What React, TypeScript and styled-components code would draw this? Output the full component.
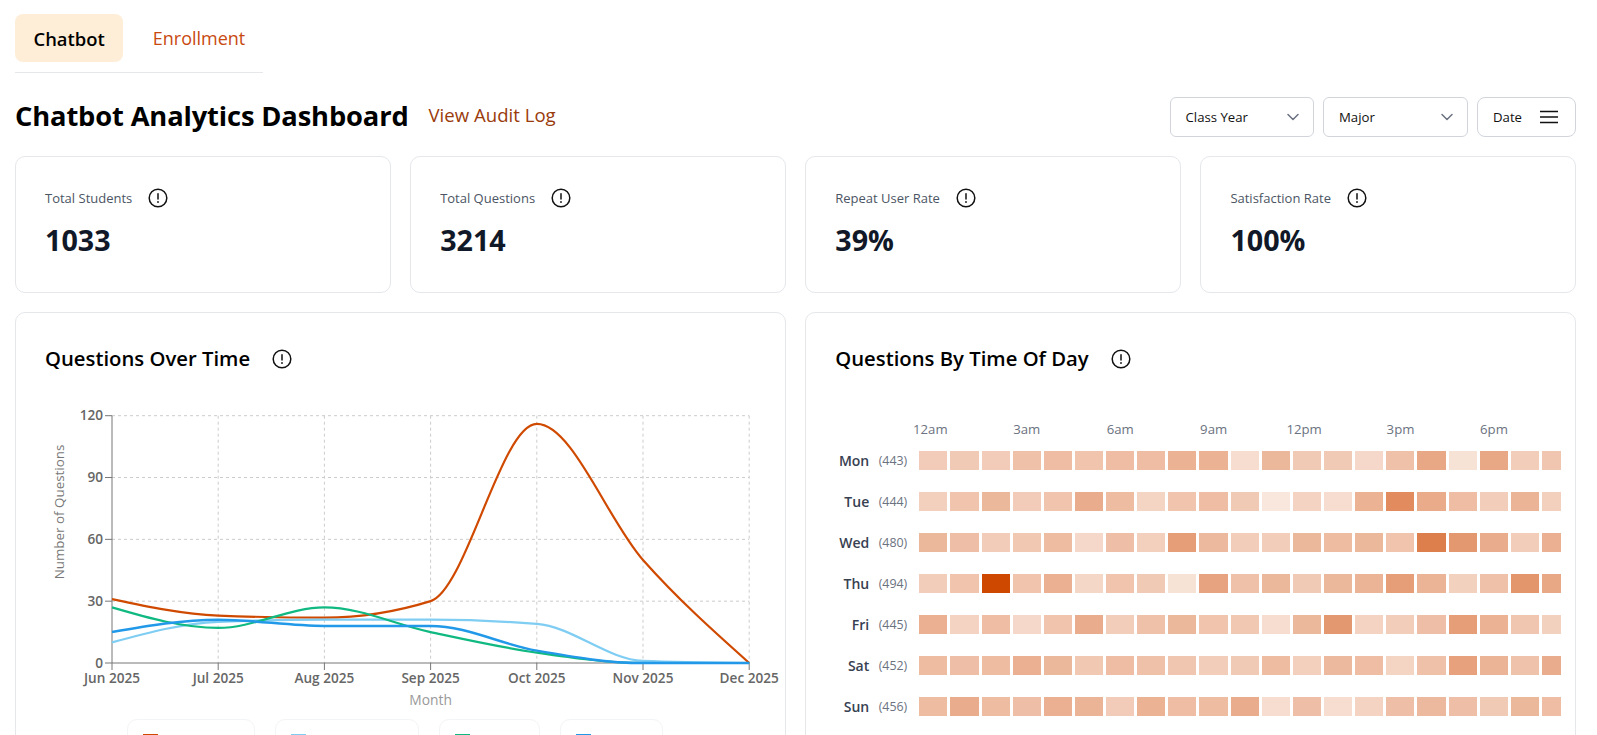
import React from "react";
import styled, { createGlobalStyle } from "styled-components";

const Global = createGlobalStyle`
  html, body { margin: 0; padding: 0; height: 100%; overflow: hidden; background: #fff; }
  body { font-family: "Open Sans", "Noto Sans", "Liberation Sans", sans-serif; color: #000; }
`;

const Page = styled.div`
  padding: 14px 21px 0 15px;
  box-sizing: border-box;
  width: 1597px;
`;

const TabBar = styled.div`
  display: flex;
  width: 248px;
  height: 59px;
  box-sizing: border-box;
  border-bottom: 1px solid #e5e7eb;
`;

const Tab = styled.div<{ $active?: boolean }>`
  height: 48px;
  padding: 0 18.5px;
  display: flex;
  align-items: center;
  border-radius: 8px;
  font-size: ${(p) => (p.$active ? 18.4 : 18)}px;
  font-weight: ${(p) => (p.$active ? 600 : 400)};
  color: ${(p) => (p.$active ? "#000" : "#c8490f")};
  background: ${(p) => (p.$active ? "#feeed8" : "transparent")};
  margin-left: ${(p) => (p.$active ? "0" : "11px")};
`;

const HeaderRow = styled.div`
  display: flex;
  align-items: center;
  height: 40px;
  margin-top: 24px;
`;

const Title = styled.h1`
  margin: 0;
  padding-bottom: 4px;
  font-size: 27.3px;
  font-weight: 700;
  letter-spacing: -0.14px;
`;

const AuditLink = styled.a`
  margin-left: 20px;
  padding-bottom: 5px;
  font-size: 18.6px;
  color: #9a3b0c;
`;

const Filters = styled.div`
  margin-left: auto;
  display: flex;
  gap: 9.5px;
`;

const FilterButton = styled.div<{ $width: number; $round?: boolean }>`
  width: ${(p) => p.$width}px;
  height: 40px;
  box-sizing: border-box;
  border: 1px solid #d1d5db;
  border-radius: ${(p) => (p.$round ? 8 : 6)}px;
  padding: 0 ${(p) => (p.$round ? 17 : 14)}px 0 15px;
  display: flex;
  align-items: center;
  justify-content: space-between;
  font-size: 13.2px;
  color: #111;
`;

const StatGrid = styled.div`
  display: grid;
  grid-template-columns: repeat(4, minmax(0, 1fr));
  gap: 19.5px;
  margin-top: 19px;
`;

const Card = styled.div`
  box-sizing: border-box;
  border: 1px solid #e5e7eb;
  border-radius: 10px;
  background: #fff;
`;

const StatCard = styled(Card)`
  height: 137px;
  padding: 29px 29px 0;
`;

const StatLabelRow = styled.div`
  display: flex;
  align-items: center;
  gap: 16px;
  height: 24px;
`;

const StatLabel = styled.span`
  font-size: 13px;
  font-weight: 500;
  color: #4b5563;
`;

const StatValue = styled.div`
  margin-top: 10px;
  font-size: 28.7px;
  line-height: 40px;
  font-weight: 700;
  color: #111827;
`;

const ChartGrid = styled.div`
  display: grid;
  grid-template-columns: repeat(2, minmax(0, 1fr));
  gap: 19.5px;
  margin-top: 19px;
`;

const ChartCard = styled(Card)`
  height: 520px;
  padding: 31px 14px 0 29px;
`;

const ChartTitleRow = styled.div`
  display: flex;
  align-items: center;
  gap: 22px;
  height: 30px;
`;

const ChartTitle = styled.h2`
  margin: 0;
  padding-bottom: 2px;
  font-size: 20.3px;
  font-weight: 600;
`;

const ChartSvg = styled.svg`
  display: block;
  margin-top: 21px;
  overflow: visible;
`;

const Legend = styled.div`
  display: flex;
  margin-left: 82px;
  gap: 20px;
`;

const LegendBox = styled.div<{ $width: number }>`
  box-sizing: border-box;
  width: ${(p) => p.$width}px;
  height: 60px;
  padding: 14px 15px;
  border: 1px solid #f3f4f6;
  border-radius: 10px;
`;

const Swatch = styled.div<{ $color: string }>`
  width: 15px;
  height: 12px;
  background: ${(p) => p.$color};
`;

const HourRow = styled.div`
  display: flex;
  margin: 44px 0 0 84px;
  height: 33px;
  padding-bottom: 11px;
  box-sizing: border-box;
  align-items: center;
`;

const HourSlot = styled.div<{ $wide?: boolean }>`
  flex: 0 0 28.15px;
  min-width: 0;
  margin-right: 65.3px;
  display: flex;
  justify-content: center;
  white-space: nowrap;
  font-size: 13.2px;
  color: #6b7280;
  transform: translateX(${(p) => (p.$wide ? "-3px" : "0")});
`;

const HeatRows = styled.div`
  display: flex;
  flex-direction: column;
  gap: 22px;
`;

const HeatRow = styled.div`
  display: flex;
  align-items: center;
  height: 19px;
`;

const DayName = styled.span`
  width: 34px;
  text-align: right;
  font-size: 14px;
  font-weight: 600;
  color: #374151;
`;

const DayCount = styled.span`
  width: 38px;
  margin-right: 12px;
  text-align: right;
  font-size: 12.4px;
  color: #6b7280;
`;

const Cells = styled.div`
  display: flex;
  gap: 3px;
  width: 642px;
  overflow: hidden;
`;

const Cell = styled.div<{ $alpha: number }>`
  flex: 0 0 28.15px;
  height: 19px;
  background: rgba(207, 72, 0, ${(p) => p.$alpha});
`;

const InfoIcon = () => (
  <svg width="20" height="20" viewBox="0 0 20 20" fill="none" stroke="#111" strokeWidth="1.5">
    <circle cx="10" cy="10" r="8.8" />
    <path d="M10 5.8v5.2" strokeLinecap="round" />
    <circle cx="10" cy="14" r="0.6" fill="#111" strokeWidth="0.8" />
  </svg>
);

const Chevron = () => (
  <svg width="12" height="8" viewBox="0 0 12 8" fill="none" stroke="#6b7280" strokeWidth="1.5" strokeLinecap="round" strokeLinejoin="round">
    <path d="M1 1.5 6 6.5 11 1.5" />
  </svg>
);

const MenuIcon = () => (
  <svg width="18" height="14" viewBox="0 0 18 14" fill="none" stroke="#111" strokeWidth="1.6">
    <path d="M0 1.5h18M0 7h18M0 12.5h18" />
  </svg>
);

// d3 curveMonotoneX
function monotonePath(pts: [number, number][]): string {
  const n = pts.length;
  const sl: number[] = [];
  for (let i = 0; i < n - 1; i++) sl.push((pts[i + 1][1] - pts[i][1]) / (pts[i + 1][0] - pts[i][0]));
  const sign = (v: number) => (v < 0 ? -1 : 1);
  const t: number[] = new Array(n).fill(0);
  for (let i = 1; i < n - 1; i++) {
    const h0 = pts[i][0] - pts[i - 1][0];
    const h1 = pts[i + 1][0] - pts[i][0];
    const p = (sl[i - 1] * h1 + sl[i] * h0) / (h0 + h1);
    t[i] = (sign(sl[i - 1]) + sign(sl[i])) * Math.min(Math.abs(sl[i - 1]), Math.abs(sl[i]), 0.5 * Math.abs(p)) || 0;
  }
  t[0] = (3 * sl[0] - t[1]) / 2;
  t[n - 1] = (3 * sl[n - 2] - t[n - 2]) / 2;
  let d = `M${pts[0][0]},${pts[0][1]}`;
  for (let i = 0; i < n - 1; i++) {
    const dx = (pts[i + 1][0] - pts[i][0]) / 3;
    d += `C${pts[i][0] + dx},${pts[i][1] + dx * t[i]} ${pts[i + 1][0] - dx},${pts[i + 1][1] - dx * t[i + 1]} ${pts[i + 1][0]},${pts[i + 1][1]}`;
  }
  return d;
}

const X0 = 67;
const XSTEP = 106.2;
const Y0 = 268;
const YUNIT = 247.3 / 120;
const months = ["Jun 2025", "Jul 2025", "Aug 2025", "Sep 2025", "Oct 2025", "Nov 2025", "Dec 2025"];
const yTicks = [0, 30, 60, 90, 120];
const xAt = (i: number) => X0 + i * XSTEP;
const yAt = (v: number) => Y0 - v * YUNIT;

const series = [
  { color: "#cf4a00", width: 2.2, data: [31, 23, 22, 30, 116, 50, 0] },
  { color: "#7fcdf3", width: 2.2, data: [10, 20, 21, 21, 19, 1, 0] },
  { color: "#10b981", width: 2.2, data: [27, 17, 27, 15, 5, 0, 0] },
  { color: "#2299e8", width: 2.5, data: [15, 21, 18, 18, 6, 0, 0] },
];

const legendBoxes = [
  { width: 128, color: "#cf4a00" },
  { width: 144, color: "#7fcdf3" },
  { width: 101, color: "#10b981" },
  { width: 103, color: "#2299e8" },
];

const LineChart = () => (
  <ChartSvg width="726" height="324" fontFamily="'Open Sans', sans-serif">
    {yTicks.slice(1).map((v) => (
      <line key={v} x1={X0} x2={xAt(6)} y1={yAt(v)} y2={yAt(v)} stroke="#ccc" strokeDasharray="3 3" />
    ))}
    {months.slice(1).map((m, i) => (
      <line key={m} x1={xAt(i + 1)} x2={xAt(i + 1)} y1={yAt(120)} y2={Y0} stroke="#ccc" strokeDasharray="3 3" />
    ))}
    <line x1={X0} x2={X0} y1={yAt(120)} y2={Y0} stroke="#777" />
    <line x1={X0} x2={xAt(6)} y1={Y0} y2={Y0} stroke="#777" />
    {yTicks.map((v) => (
      <g key={v}>
        <line x1={X0 - 7} x2={X0} y1={yAt(v)} y2={yAt(v)} stroke="#777" />
        <text x={X0 - 9} y={yAt(v) + 4.5} textAnchor="end" fontSize="13.6" fontWeight="600" fill="#666">{v}</text>
      </g>
    ))}
    {months.map((m, i) => (
      <g key={m}>
        <line x1={xAt(i)} x2={xAt(i)} y1={Y0} y2={Y0 + 7} stroke="#777" />
        <text x={xAt(i)} y={Y0 + 19.5} textAnchor="middle" fontSize="13.6" fontWeight="600" fill="#666">{m}</text>
      </g>
    ))}
    <text x={xAt(3)} y={310} textAnchor="middle" fontSize="13.8" fill="#999">Month</text>
    <text transform="translate(18.5 117) rotate(-90)" textAnchor="middle" fontSize="13.4" fill="#777">Number of Questions</text>
    {series.map((s) => (
      <path
        key={s.color}
        d={monotonePath(s.data.map((v, i) => [xAt(i), yAt(v)] as [number, number]))}
        fill="none"
        stroke={s.color}
        strokeWidth={s.width}
      />
    ))}
  </ChartSvg>
);

const hours = ["12am", "3am", "6am", "9am", "12pm", "3pm", "6pm"];

const heat: { day: string; count: number; values: number[] }[] = [
  { day: "Mon", count: 443, values: [0.28, 0.29, 0.28, 0.34, 0.36, 0.32, 0.36, 0.36, 0.42, 0.42, 0.19, 0.39, 0.29, 0.29, 0.21, 0.34, 0.48, 0.16, 0.48, 0.27, 0.31] },
  { day: "Tue", count: 444, values: [0.26, 0.32, 0.39, 0.28, 0.32, 0.45, 0.37, 0.23, 0.32, 0.36, 0.29, 0.13, 0.24, 0.19, 0.42, 0.63, 0.46, 0.36, 0.27, 0.41, 0.26] },
  { day: "Wed", count: 480, values: [0.39, 0.35, 0.28, 0.3, 0.37, 0.21, 0.35, 0.26, 0.53, 0.38, 0.27, 0.27, 0.39, 0.37, 0.39, 0.32, 0.7, 0.56, 0.45, 0.27, 0.43] },
  { day: "Thu", count: 494, values: [0.27, 0.32, 1, 0.32, 0.43, 0.22, 0.32, 0.29, 0.16, 0.5, 0.34, 0.39, 0.29, 0.39, 0.41, 0.53, 0.41, 0.25, 0.34, 0.58, 0.48] },
  { day: "Fri", count: 445, values: [0.43, 0.24, 0.36, 0.21, 0.32, 0.45, 0.27, 0.34, 0.39, 0.32, 0.3, 0.19, 0.39, 0.56, 0.24, 0.27, 0.35, 0.53, 0.42, 0.31, 0.25] },
  { day: "Sat", count: 452, values: [0.37, 0.35, 0.37, 0.43, 0.39, 0.3, 0.36, 0.34, 0.31, 0.27, 0.29, 0.37, 0.26, 0.38, 0.36, 0.23, 0.34, 0.51, 0.41, 0.33, 0.45] },
  { day: "Sun", count: 456, values: [0.37, 0.45, 0.37, 0.35, 0.43, 0.41, 0.28, 0.42, 0.36, 0.37, 0.45, 0.19, 0.35, 0.19, 0.24, 0.35, 0.38, 0.35, 0.29, 0.39, 0.36] },
];

const stats = [
  { label: "Total Students", value: "1033" },
  { label: "Total Questions", value: "3214" },
  { label: "Repeat User Rate", value: "39%" },
  { label: "Satisfaction Rate", value: "100%" },
];

export default function App() {
  return (
    <Page>
      <Global />
      <TabBar>
        <Tab $active>Chatbot</Tab>
        <Tab>Enrollment</Tab>
      </TabBar>
      <HeaderRow>
        <Title>Chatbot Analytics Dashboard</Title>
        <AuditLink>View Audit Log</AuditLink>
        <Filters>
          <FilterButton $width={144}>Class Year<Chevron /></FilterButton>
          <FilterButton $width={144.5}>Major<Chevron /></FilterButton>
          <FilterButton $width={99} $round>Date<MenuIcon /></FilterButton>
        </Filters>
      </HeaderRow>
      <StatGrid>
        {stats.map((s) => (
          <StatCard key={s.label}>
            <StatLabelRow>
              <StatLabel>{s.label}</StatLabel>
              <InfoIcon />
            </StatLabelRow>
            <StatValue>{s.value}</StatValue>
          </StatCard>
        ))}
      </StatGrid>
      <ChartGrid>
        <ChartCard>
          <ChartTitleRow>
            <ChartTitle>Questions Over Time</ChartTitle>
            <InfoIcon />
          </ChartTitleRow>
          <LineChart />
          <Legend>
            {legendBoxes.map((b) => (
              <LegendBox key={b.color} $width={b.width}>
                <Swatch $color={b.color} />
              </LegendBox>
            ))}
          </Legend>
        </ChartCard>
        <ChartCard>
          <ChartTitleRow>
            <ChartTitle>Questions By Time Of Day</ChartTitle>
            <InfoIcon />
          </ChartTitleRow>
          <HourRow>
            {hours.map((h) => (
              <HourSlot key={h} $wide={h.startsWith("12")}>{h}</HourSlot>
            ))}
          </HourRow>
          <HeatRows>
            {heat.map((r) => (
              <HeatRow key={r.day}>
                <DayName>{r.day}</DayName>
                <DayCount>({r.count})</DayCount>
                <Cells>
                  {r.values.map((v, i) => (
                    <Cell key={i} $alpha={v} />
                  ))}
                </Cells>
              </HeatRow>
            ))}
          </HeatRows>
        </ChartCard>
      </ChartGrid>
    </Page>
  );
}
